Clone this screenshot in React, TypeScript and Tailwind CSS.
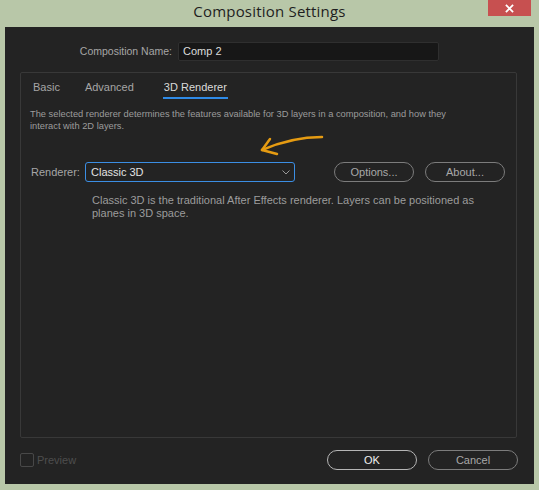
const ui = { fontFamily: '"Liberation Sans", Arial, sans-serif' };

function PillButton({ label, width, strong }: { label: string; width: string; strong?: boolean }) {
  return (
    <button
      className={`${width} h-[20px] rounded-full border text-[11px] flex items-center justify-center ${
        strong ? 'border-[#b5b5b5] text-[#f0f0f0]' : 'border-[#7c7c7c] text-[#a8a8a8]'
      }`}
      style={ui}
    >
      {label}
    </button>
  );
}

export default function App() {
  return (
    <div className="w-[539px] h-[490px] bg-[#b8c7a8] flex flex-col relative overflow-hidden">
      {/* Title bar */}
      <div className="h-[27px] flex items-center justify-center relative shrink-0 pb-[4px]">
        <span className="text-[15px] text-[#1e1e1e] tracking-[0.2px]" style={{ fontFamily: '"Open Sans", "Noto Sans", sans-serif' }}>
          Composition Settings
        </span>
        <div className="absolute right-[8px] top-0 w-[43px] h-[16px] bg-[#c75050] flex items-center justify-center">
          <svg className="w-[9px] h-[9px]" viewBox="0 0 10 10" fill="none" stroke="#ffffff" strokeWidth={2}>
            <path d="M1 1l8 8M9 1l-8 8" />
          </svg>
        </div>
      </div>

      {/* Dialog body */}
      <div className="mx-[5px] mb-[6px] flex-1 bg-[#232323] flex flex-col" style={ui}>
        {/* Composition name */}
        <div className="flex items-center mt-[15px] h-[19px]">
          <span className="w-[167px] text-right text-[10.5px] text-[#a6a6a6]">Composition Name:</span>
          <div className="ml-[6px] w-[261px] h-[19px] bg-[#171717] border border-[#2f2f2f] rounded-[2px] flex items-center px-[4px] text-[11px] text-[#dcdcdc]">
            Comp 2
          </div>
        </div>

        {/* Group box */}
        <div className="ml-[15px] mt-[11px] w-[497px] h-[366px] border border-[#383838] rounded-[2px] flex flex-col">
          <div className="flex items-start pl-[12px] pt-[6px] h-[26px] text-[11px]">
            <span className="text-[#a6a6a6]">Basic</span>
            <span className="ml-[25px] text-[#a6a6a6]">Advanced</span>
            <div className="ml-[29px] flex flex-col">
              <span className="text-[#dadada] px-[1px]">3D Renderer</span>
              <div className="h-[2px] mt-[1px] bg-[#2f8ae6]" />
            </div>
          </div>

          <p className="pl-[9px] mt-[9px] text-[9.3px] leading-[12px] text-[#9c9c9c] whitespace-nowrap">
            The selected renderer determines the features available for 3D layers in a composition, and how they
            <br />
            interact with 2D layers.
          </p>

          <div className="flex items-center mt-[30px] h-[20px]">
            <span className="pl-[10px] w-[64px] text-[11px] text-[#a6a6a6]">Renderer:</span>
            <div className="w-[210px] h-[20px] border border-[#3b8ee4] rounded-[3px] flex items-center justify-between pl-[5px] pr-[4px] text-[11px] text-[#e2e2e2]">
              <span>Classic 3D</span>
              <svg className="w-[8px] h-[5px]" viewBox="0 0 8 5" fill="none" stroke="#9a9a9a" strokeWidth={1}>
                <path d="M0.5 0.5l3.5 3.5 3.5-3.5" />
              </svg>
            </div>
            <div className="ml-[39px] flex gap-[11px]">
              <PillButton label="Options..." width="w-[80px]" />
              <PillButton label="About..." width="w-[80px]" />
            </div>
          </div>

          <p className="pl-[71px] mt-[12px] text-[11px] leading-[13px] text-[#9c9c9c] whitespace-nowrap">
            Classic 3D is the traditional After Effects renderer. Layers can be positioned as
            <br />
            planes in 3D space.
          </p>
        </div>

        {/* Footer */}
        <div className="flex items-center mt-[12px] pl-[15px] pr-[16px]">
          <div className="w-[14px] h-[14px] border border-[#484848] rounded-[2px]" />
          <span className="ml-[3px] text-[11px] text-[#4e4e4e]">Preview</span>
          <div className="ml-auto flex gap-[11px]">
            <PillButton label="OK" width="w-[90px]" strong />
            <PillButton label="Cancel" width="w-[90px]" />
          </div>
        </div>
      </div>

      {/* Hand-drawn arrow annotation */}
      <svg className="absolute left-[255px] top-[130px] w-[75px] h-[28px]" viewBox="255 130 75 28" fill="none" stroke="#e59b12" strokeWidth={2.5} strokeLinecap="round" strokeLinejoin="round">
        <path d="M322 137 C305 137 285 140 262 150" />
        <path d="M270 139 L262 150 L277 154" />
      </svg>
    </div>
  );
}
